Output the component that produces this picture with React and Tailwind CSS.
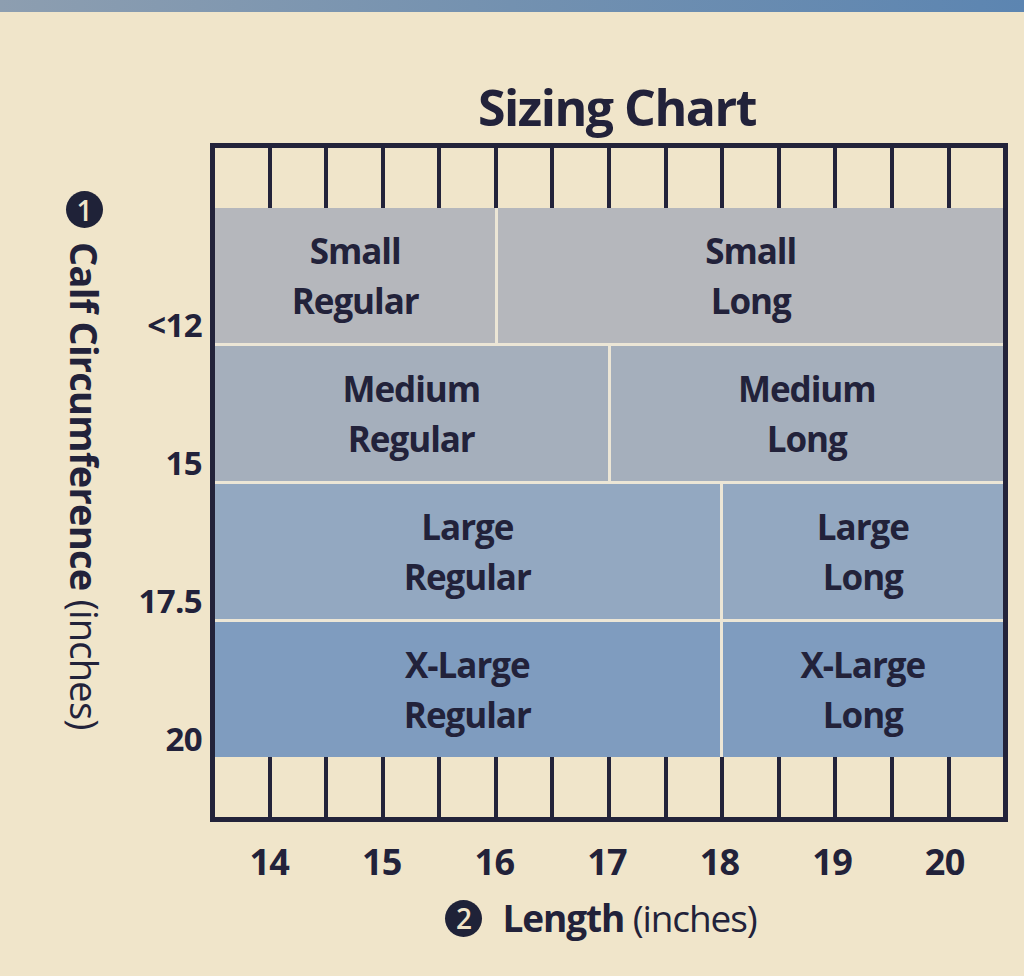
const ink = "text-[#22223a]";

const rows = [
  {
    cols: "grid-cols-[5fr_9fr]",
    bg: "bg-[#b5b7bc]",
    y: "<12",
    cells: [["Small", "Regular"], ["Small", "Long"]],
  },
  {
    cols: "grid-cols-[7fr_7fr]",
    bg: "bg-[#a5afbc]",
    y: "15",
    cells: [["Medium", "Regular"], ["Medium", "Long"]],
  },
  {
    cols: "grid-cols-[9fr_5fr]",
    bg: "bg-[#93a8c1]",
    y: "17.5",
    cells: [["Large", "Regular"], ["Large", "Long"]],
  },
  {
    cols: "grid-cols-[9fr_5fr]",
    bg: "bg-[#7f9cbf]",
    y: "20",
    cells: [["X-Large", "Regular"], ["X-Large", "Long"]],
  },
];

const lengths = ["14", "15", "16", "17", "18", "19", "20"];

function TickRow() {
  return (
    <div className="flex h-[60px]">
      {Array.from({ length: 14 }).map((_, i) => (
        <div
          key={i}
          className={`flex-1 ${i > 0 ? "border-l-[4px] border-[#23233a]" : ""}`}
        />
      ))}
    </div>
  );
}

function Badge({ n }) {
  return (
    <div className="shrink-0 w-[37px] h-[37px] rounded-full bg-[#1f2238] text-[#f0e5ca] flex items-center justify-center text-[28px] font-semibold leading-none">
      {n}
    </div>
  );
}

export default function App() {
  return (
    <div
      className={`w-[1024px] h-[976px] overflow-hidden bg-[#f0e5ca] ${ink}`}
      style={{ fontFamily: '"Open Sans", "Noto Sans", sans-serif' }}
    >
      {/* strip along the top edge */}
      <div className="h-[12px] bg-gradient-to-r from-[#8d9eb0] via-[#7391b0] to-[#5c85b1]" />

      {/* Title */}
      <div className="pl-[210px] pt-[70px] pb-[11px] text-center">
        <h1 className="text-[50px] leading-[50px] font-bold tracking-[-0.03em]">
          Sizing Chart
        </h1>
      </div>

      <div className="flex">
        {/* left axis */}
        <div className="w-[210px] flex">
          <div className="ml-[66px] w-[37px] pt-[48px] flex flex-col items-center">
            <Badge n="1" />
            <div className="mt-[14px] [writing-mode:vertical-rl] text-[38px] leading-[40px] tracking-[-0.02em] whitespace-nowrap">
              <span className="font-bold">Calf Circumference</span>{" "}
              (inches)
            </div>
          </div>
          <div className="flex-1 pr-[8px] pt-[65px] flex flex-col gap-[3px]">
            {rows.map((r) => (
              <div
                key={r.y}
                className="h-[135px] flex items-end justify-end pb-[2px] text-[33px] leading-[32px] font-bold tracking-[-0.02em]"
              >
                {r.y}
              </div>
            ))}
          </div>
        </div>

        {/* chart frame */}
        <div className="w-[798px] h-[679px] border-[5px] border-[#23233a] flex flex-col">
          <TickRow />
          <div className="flex flex-col gap-[3px] bg-[#ece6d6]">
            {rows.map((r) => (
              <div key={r.y} className={`grid ${r.cols} gap-[3px] h-[135px]`}>
                {r.cells.map((c, i) => (
                  <div
                    key={i}
                    className={`${r.bg} flex flex-col items-center justify-center text-[35px] leading-[50px] font-bold tracking-[-0.03em]`}
                  >
                    <span>{c[0]}</span>
                    <span>{c[1]}</span>
                  </div>
                ))}
              </div>
            ))}
          </div>
          <TickRow />
        </div>
      </div>

      {/* x axis numbers */}
      <div className="ml-[213px] w-[788px] mt-[20px] grid grid-cols-7">
        {lengths.map((l) => (
          <div
            key={l}
            className="text-center text-[36px] leading-[40px] font-bold tracking-[-0.02em]"
          >
            {l}
          </div>
        ))}
      </div>

      <div className="ml-[178px] mt-[16px] flex justify-center items-center gap-[20px]">
        <Badge n="2" />
        <div className="text-[37px] leading-[40px] tracking-[-0.03em]">
          <span className="font-bold">Length</span> (inches)
        </div>
      </div>
    </div>
  );
}
